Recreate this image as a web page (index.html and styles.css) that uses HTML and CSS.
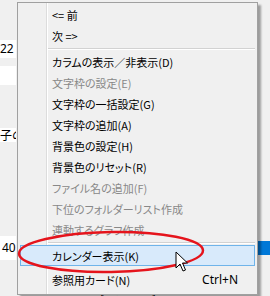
FILE: index.html
```html
<!DOCTYPE html>
<html lang="ja">
<head>
    <meta charset="UTF-8">
    <title>コンテキストメニュー</title>
    <link rel="stylesheet" href="styles.css">
</head>
<body>
    <div class="window">
        <div class="spacer s42"></div>
        <div class="row h18"><span class="cell num">22</span></div>
        <div class="spacer s8"></div>
        <div class="row h20"><span class="cell"></span></div>
        <div class="spacer s44"></div>
        <div class="row h14"><span class="cell jp">子の設</span></div>
        <div class="spacer s98"></div>
        <div class="row h24">
            <span class="cell num">40</span>
            <span class="selbar"></span>
        </div>
        <div class="footer-text">[設定表示]</div>
    </div>

    <div class="menu">
        <div class="item">&lt;= 前</div>
        <div class="item">次 =&gt;</div>
        <div class="sep"></div>
        <div class="item">カラムの表示／非表示(D)</div>
        <div class="item off">文字枠の設定(E)</div>
        <div class="item">文字枠の一括設定(G)</div>
        <div class="item">文字枠の追加(A)</div>
        <div class="item">背景色の設定(H)</div>
        <div class="item">背景色のリセット(R)</div>
        <div class="item off">ファイル名の追加(F)</div>
        <div class="item off">下位のフォルダーリスト作成</div>
        <div class="item off">連動するグラフ作成</div>
        <div class="sep"></div>
        <div class="item hot">カレンダー表示(K)</div>
        <div class="item">参照用カード(N)<span class="key">Ctrl+N</span></div>
    </div>

    <svg class="circle" width="270" height="296" viewBox="0 0 270 296">
        <ellipse cx="111" cy="252" rx="92" ry="20" transform="rotate(-1 111 252)" fill="none" stroke="#e5141c" stroke-width="2.5"/>
    </svg>

    <svg class="cursor" width="14" height="22" viewBox="0 0 14 22">
        <path d="M1 1 L1 17 L5 13 L8 20 L10.5 19 L7.5 12 L12.5 12 Z" fill="#fff" stroke="#000" stroke-width="1" stroke-linejoin="round"/>
    </svg>
</body>
</html>
```

FILE: styles.css
```css
body {
    margin: 0;
    width: 270px;
    height: 296px;
    overflow: hidden;
    background: #f0f0f0;
    font-family: "Noto Sans CJK JP", sans-serif;
}
.window {
    display: flex;
    flex-direction: column;
    height: 296px;
}
.s42 { height: 42px; }
.s8 { height: 8px; }
.s44 { height: 44px; }
.s98 { height: 98px; }
.row {
    display: flex;
    align-items: stretch;
    justify-content: space-between;
}
.h18 { height: 18px; }
.h20 { height: 20px; }
.h14 { height: 14px; }
.h24 { height: 24px; }
.cell {
    width: 16px;
    background: #fff;
    font-size: 12px;
    line-height: 18px;
    color: #000;
    overflow: hidden;
    white-space: nowrap;
}
.num {
    font-family: "Noto Sans", sans-serif;
}
.h24 .num {
    line-height: 24px;
    text-indent: 2px;
}
.jp {
    line-height: 14px;
    font-size: 12px;
}
.selbar {
    align-self: center;
    width: 12px;
    height: 14px;
    background: #0078d7;
}
.footer-text {
    margin: 22px 0 0 100px;
    font-size: 12px;
    line-height: 14px;
}

/* context menu over the window */
.menu {
    position: absolute;
    left: 17px;
    top: 2px;
    width: 239px;
    height: 289px;
    padding: 1px 0;
    background: #f0f0f0;
    border: 1px solid #a0a0a0;
    box-shadow: 3px 3px 2px rgba(0,0,0,0.35);
    background-image: linear-gradient(to right, transparent 28px, #dcdcdc 28px, #dcdcdc 29px, #fff 29px, #fff 30px, transparent 30px);
    font-size: 11px;
    font-feature-settings: "palt";
    color: #000;
}
.item {
    display: flex;
    justify-content: space-between;
    align-items: center;
    height: 19px;
    margin: 0 2px;
    padding: 0 16px 0 31px;
    border: 1px solid transparent;
    white-space: nowrap;
}
.off {
    color: #888;
}
.hot {
    background: #d8eafb;
    border-color: #6fb4ea;
    margin-bottom: 3px;
}
.sep {
    height: 1px;
    margin: 2px 2px 1px 30px;
    background: #d2d2d2;
    border-bottom: 1px solid #fff;
}
.key {
    font-family: "Noto Sans", sans-serif;
    font-size: 12px;
}

.circle {
    position: absolute;
    left: 0;
    top: 0;
}
.cursor {
    position: absolute;
    left: 175px;
    top: 251px;
}
```
